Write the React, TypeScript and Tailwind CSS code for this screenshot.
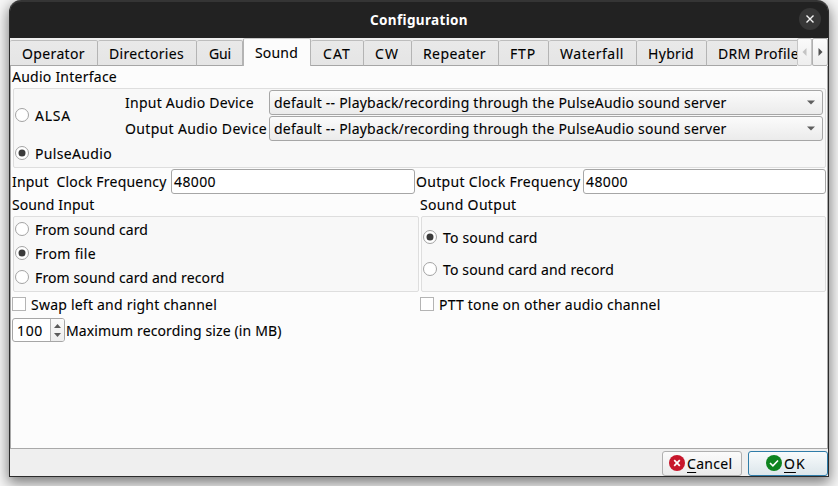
import { useLayoutEffect, useRef, useState } from "react";
import type { ReactNode } from "react";

/* Text run whose tracking is adjusted so that it spans `w` pixels. */
function T({ w, children, className = "" }: { w: number; children: ReactNode; className?: string }) {
  const ref = useRef<HTMLSpanElement>(null);
  const [spacing, setSpacing] = useState(0);
  useLayoutEffect(() => {
    const el = ref.current;
    if (!el) return;
    const n = (el.textContent || "").length;
    setSpacing((w - el.getBoundingClientRect().width) / n);
  }, [w]);
  return (
    <span ref={ref} className={"inline-block shrink-0 whitespace-pre " + className} style={{ letterSpacing: spacing }}>
      {children}
    </span>
  );
}

function Radio({ label, w, on = false, className = "" }: { label: string; w: number; on?: boolean; className?: string }) {
  return (
    <div className={"flex items-center " + className}>
      <span className="flex size-[14px] shrink-0 items-center justify-center rounded-full border border-[#a3a3a3] bg-white">
        {on && <span className="size-[6px] rounded-full bg-[#3b3b3b] ring-[0.5px] ring-[#3b3b3b]" />}
      </span>
      <T w={w} className="ml-[6px] mt-[2px]">{label}</T>
    </div>
  );
}

function Check({ label, w }: { label: string; w: number }) {
  return (
    <div className="flex h-[24px] items-center">
      <span className="size-[14px] shrink-0 border border-[#b4b4b4] bg-white" />
      <T w={w} className="ml-[5px] mt-px">{label}</T>
    </div>
  );
}

function Combo() {
  return (
    <div className="flex h-[25px] w-[554px] items-center justify-between rounded-[3px] border border-[#a6a6a6] bg-linear-to-b from-[#fbfbfb] to-[#ebebeb] pl-[4px] pr-[7px]">
      <T w={452.5}>default -- Playback/recording through the PulseAudio sound server</T>
      <svg width="8" height="5" viewBox="0 0 8 5"><path d="M0 .5h8L4 4.5z" fill="#5e5e5e" /></svg>
    </div>
  );
}

const tabs: { label: string; box: string; w: number }[] = [
  { label: "Operator", box: "w-[88px] pl-[12px]", w: 63 },
  { label: "Directories", box: "w-[99px] pl-[11px]", w: 75 },
  { label: "Gui", box: "w-[46px] pl-[12px]", w: 22 },
  { label: "Sound", box: "w-[68px] pl-[11px]", w: 43 },
  { label: "CAT", box: "w-[53px] pl-[12px]", w: 28 },
  { label: "CW", box: "w-[48px] pl-[11px]", w: 24 },
  { label: "Repeater", box: "w-[87px] pl-[11px]", w: 63 },
  { label: "FTP", box: "w-[50px] pl-[11px]", w: 26 },
  { label: "Waterfall", box: "w-[88px] pl-[11px]", w: 64 },
  { label: "Hybrid", box: "w-[70px] pl-[11px]", w: 46 },
  { label: "DRM Profiles", box: "w-[112px] pl-[11px]", w: 88 },
];

function Tabs() {
  return (
    <div className="flex h-[28px] items-end bg-[#efefef]">
      <div className="flex h-[28px] w-[787px] items-end overflow-hidden">
        {tabs.map((t) =>
          t.label === "Sound" ? (
            <div key={t.label} className={"flex h-[28px] shrink-0 items-center rounded-t-[2px] border-x border-t border-[#b4b4b4] border-t-[#c8c8c8] bg-[#fcfcfc] " + t.box}>
              <T w={t.w}>{t.label}</T>
            </div>
          ) : (
            <div key={t.label} className={"flex h-[26px] shrink-0 items-center rounded-t-[2px] border-y border-r border-[#b4b4b4] border-b-[#a6a6a6] border-t-[#bdbdbd] bg-linear-to-b from-[#e9e9e9] to-[#e5e5e5] " + t.box}>
              <T w={t.w} className="mt-[2px]">{t.label}</T>
            </div>
          ),
        )}
      </div>
      <div className="flex h-[28px]">
        <div className="flex w-[15px] items-center justify-center rounded-[2px] border border-[#c6c6c6] bg-linear-to-b from-[#fafafa] to-[#eeeeee]">
          <svg width="5" height="8" viewBox="0 0 5 8"><path d="M4.5 0v8L.5 4z" fill="#c4c4c4" /></svg>
        </div>
        <div className="flex w-[16px] items-center justify-center rounded-[2px] border border-[#b0b0b0] bg-linear-to-b from-[#fcfcfc] to-[#eeeeee]">
          <svg width="5" height="8" viewBox="0 0 5 8"><path d="M.5 0v8l4-4z" fill="#505050" /></svg>
        </div>
      </div>
    </div>
  );
}

const frame = "rounded-[2px] border border-[#dedede] bg-[#f8f8f8]";
const field = "flex h-[25px] items-center rounded-[3px] border border-[#a6a6a6] bg-white pl-[2px]";

export default function App() {
  return (
    <div className="h-[486px] w-[838px] overflow-hidden bg-[#f7f7f7] pl-[9px] font-['Noto_Sans','Open_Sans',sans-serif] text-[14px] leading-[20px] text-black [-webkit-text-stroke:0.1px]">
      <div className="flex h-[477px] w-[820px] flex-col rounded-t-[12px] border-x border-b border-[#2c2c2c] bg-[#efefef] shadow-[0_5px_14px_1px_rgba(0,0,0,0.5)]">
        <div className="flex h-[38px] shrink-0 items-center rounded-t-[11px] border-t-2 border-[#353535] bg-[#222222]">
          <div className="flex flex-1 justify-center pl-[29px]">
            <T w={98} className="font-bold text-[13.5px] text-white [-webkit-text-stroke:0]">Configuration</T>
          </div>
          <div className="mb-[2px] mr-[7px] flex size-[22px] items-center justify-center rounded-full bg-[#373737]">
            <svg width="8" height="8" viewBox="0 0 8 8"><path d="M.5.5l7 7M7.5.5l-7 7" stroke="#f4f4f4" strokeWidth="1.4" /></svg>
          </div>
        </div>

        <Tabs />

        <div className="flex h-[383px] shrink-0 flex-col border-x border-b border-[#a9a9a9] bg-[#fcfcfc] pl-px">
          <div className="flex h-[22px] items-center"><T w={105}>Audio Interface</T></div>
          <div className={"ml-px flex h-[80px] w-[813px] " + frame}>
            <div className="flex w-[111px] flex-col pl-px pt-[16px]">
              <Radio label="ALSA" w={36} className="h-[20px]" />
              <Radio label="PulseAudio" w={77} on className="mt-[18px] h-[20px]" />
            </div>
            <div className="flex w-[144px] flex-col gap-px pt-px">
              <div className="flex h-[25px] items-center"><T w={129}>Input Audio Device</T></div>
              <div className="flex h-[25px] items-center"><T w={142}>Output Audio Device</T></div>
            </div>
            <div className="flex flex-col gap-px pt-px">
              <Combo />
              <Combo />
            </div>
          </div>
          <div className="mt-px flex h-[25px] items-center">
            <div className="w-[159px]"><T w={154.5}>Input  Clock Frequency</T></div>
            <div className={"w-[244px] " + field}><T w={42}>48000</T></div>
            <div className="w-[168px] pl-px"><T w={164.5}>Output Clock Frequency</T></div>
            <div className={"w-[243px] " + field}><T w={42}>48000</T></div>
          </div>
          <div className="flex h-[22px] items-center">
            <div className="w-[408px]"><T w={82.5}>Sound Input</T></div>
            <T w={96.5}>Sound Output</T>
          </div>
          <div className="ml-px flex gap-[2px]">
            <div className={"flex h-[76px] w-[406px] flex-col gap-[4px] pl-px pt-[2px] " + frame}>
              <Radio label="From sound card" w={113} className="h-[20px]" />
              <Radio label="From file" w={61} on className="h-[20px]" />
              <Radio label="From sound card and record" w={189.5} className="h-[20px]" />
            </div>
            <div className={"flex h-[76px] w-[405px] flex-col gap-[12px] pl-px pt-[10px] " + frame}>
              <Radio label="To sound card" w={94.5} on className="h-[20px]" />
              <Radio label="To sound card and record" w={171} className="h-[20px]" />
            </div>
          </div>
          <div className="flex h-[26px]">
            <div className="w-[408px]"><Check label="Swap left and right channel" w={186} /></div>
            <Check label="PTT tone on other audio channel" w={221.5} />
          </div>
          <div className="flex items-center">
            <div className="flex h-[24px] w-[53px] overflow-hidden rounded-[3px] border border-[#a6a6a6] bg-white">
              <div className="flex w-[38px] items-center border-r border-[#b4b4b4] pl-[4px] pt-px"><T w={26}>100</T></div>
              <div className="flex flex-1 flex-col items-center justify-center gap-[5px] bg-linear-to-b from-[#fbfbfb] to-[#ededed]">
                <svg width="7" height="4" viewBox="0 0 7 4"><path d="M0 4h7L3.5 0z" fill="#5a5a5a" /></svg>
                <svg width="7" height="4" viewBox="0 0 7 4"><path d="M0 0h7L3.5 4z" fill="#5a5a5a" /></svg>
              </div>
            </div>
            <T w={215.5} className="ml-px mt-[2px]">Maximum recording size (in MB)</T>
          </div>
        </div>

        <div className="flex h-[27px] items-end justify-end gap-[6px]">
          <div className="flex h-[25px] w-[80px] items-center rounded-[3px] border border-[#b0b0b0] bg-linear-to-b from-[#fbfbfb] to-[#ebebeb] pl-[6px]">
            <svg className="mb-px" width="16" height="16" viewBox="0 0 16 16"><circle cx="8" cy="8" r="8" fill="#c7162b" /><path d="M5.2 5.2l5.6 5.6M10.8 5.2l-5.6 5.6" stroke="#fff" strokeWidth="1.7" /></svg>
            <T w={45.5} className="ml-[2px]"><span className="underline underline-offset-[3px]">C</span>ancel</T>
          </div>
          <div className="flex h-[25px] w-[80px] items-center rounded-[3px] border border-[#2f7ca8] bg-linear-to-b from-[#f8fbfc] to-[#dce6eb] pl-[17px]">
            <svg className="mb-px" width="16" height="16" viewBox="0 0 16 16"><circle cx="8" cy="8" r="8" fill="#0e8420" /><path d="M4 8l2.9 2.8L12 5.5" fill="none" stroke="#fff" strokeWidth="1.6" /></svg>
            <T w={21.5} className="ml-[2px]"><span className="underline underline-offset-[3px]">O</span>K</T>
          </div>
        </div>
      </div>
    </div>
  );
}
